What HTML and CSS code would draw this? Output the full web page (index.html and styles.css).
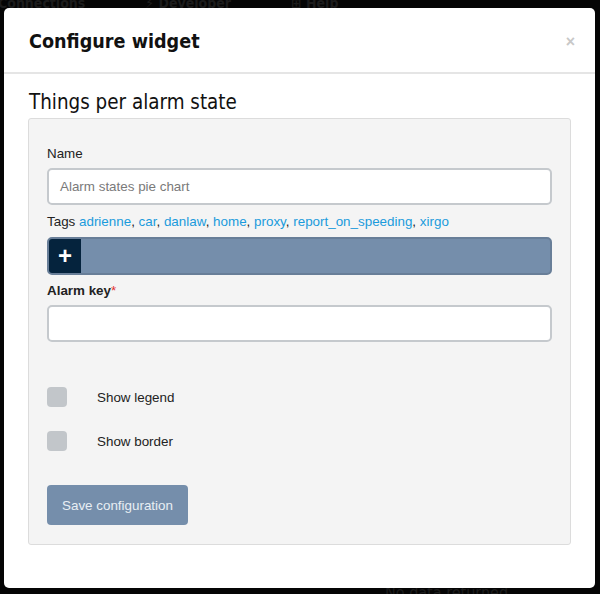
FILE: index.html
```html
<!DOCTYPE html>
<html>
<head>
<meta charset="utf-8">
<link rel="stylesheet" href="styles.css">
</head>
<body>
<div class="backdrop">
  <div class="bg-top"><span>Connections</span><span>⚡ Developer</span><span>⊞ Help</span></div>
  <div class="modal">
    <div class="modal-header">
      <h1 class="modal-title">Configure widget</h1>
      <span class="close">×</span>
    </div>
    <div class="modal-body">
      <h2 class="section-title">Things per alarm state</h2>
      <div class="panel">
        <label class="label">Name</label>
        <div class="input placeholder">Alarm states pie chart</div>
        <div class="tags">Tags <a>adrienne</a>, <a>car</a>, <a>danlaw</a>, <a>home</a>, <a>proxy</a>, <a>report_on_speeding</a>, <a>xirgo</a></div>
        <div class="tagbar"><span class="plus">+</span></div>
        <label class="label bold">Alarm key<span class="req">*</span></label>
        <div class="input"></div>
        <div class="checks">
          <div class="check"><span class="box"></span><span class="check-label">Show legend</span></div>
          <div class="check"><span class="box"></span><span class="check-label">Show border</span></div>
        </div>
        <button class="save">Save configuration</button>
      </div>
    </div>
  </div>
  <div class="bg-bottom">No data returned</div>
</div>
</body>
</html>
```
FILE: styles.css
```css
html, body {
  margin: 0;
  padding: 0;
  background: #050505;
  width: 600px;
  height: 594px;
  overflow: hidden;
  font-family: "Liberation Sans", Arial, sans-serif;
}
.backdrop {
  position: relative;
  width: 600px;
  height: 594px;
  padding-top: 8px;
  box-sizing: border-box;
}
.bg-top {
  position: absolute;
  top: -5px;
  left: -2px;
  display: flex;
  gap: 60px;
  color: #1c1c1c;
  font-size: 14px;
  font-weight: bold;
  font-family: "DejaVu Sans Condensed", sans-serif;
}
.bg-bottom {
  position: absolute;
  top: 583px;
  left: 385px;
  color: #1c1c1c;
  font-size: 16px;
  font-family: "DejaVu Sans Condensed", sans-serif;
}
.modal {
  position: relative;
  z-index: 1;
  margin-left: 4px;
  width: 591px;
  height: 580px;
  background: #fff;
  border-radius: 5px;
  box-sizing: border-box;
}
.modal-header {
  height: 66px;
  border-bottom: 2px solid #e5e5e5;
  display: flex;
  align-items: center;
  justify-content: space-between;
  padding: 2px 20px 0 25px;
  box-sizing: border-box;
}
.modal-title {
  margin: 0;
  font-family: "DejaVu Sans Condensed", sans-serif;
  font-weight: bold;
  font-size: 19.6px;
  color: #111;
}
.close {
  color: #c8c8c8;
  font-size: 16px;
  font-weight: bold;
  margin-top: 2px;
}
.modal-body {
  padding: 16px 24px 0 24px;
}
.section-title {
  margin: 0 0 4px 1px;
  font-family: "DejaVu Sans Condensed", sans-serif;
  font-weight: normal;
  font-size: 20.4px;
  color: #111;
  line-height: 24px;
}
.panel {
  background: #f4f4f4;
  border: 1px solid #dcdcdc;
  border-radius: 3px;
  padding: 27px 18px 19px 18px;
  display: flex;
  flex-direction: column;
  align-items: stretch;
}
.label {
  font-size: 13.4px;
  color: #222;
  line-height: 16px;
  margin-bottom: 6px;
}
.label.bold { font-weight: bold; margin-top: 8px; margin-bottom: 6px; }
.req { color: #e03030; font-weight: normal; }
.input {
  height: 37px;
  background: #fff;
  border: 2px solid #c5c9cd;
  border-radius: 5px;
  box-sizing: border-box;
  font-size: 13.4px;
  line-height: 33px;
  padding-left: 11px;
}
.placeholder { color: #7a7a7a; }
.tags {
  font-size: 13.4px;
  color: #222;
  margin-top: 9px;
  line-height: 16px;
}
.tags a { color: #1a9bdc; }
.tagbar {
  margin-top: 7px;
  height: 38px;
  background: #758eab;
  border: 2px solid #687e98;
  border-radius: 5px;
  box-sizing: border-box;
  overflow: hidden;
  display: flex;
}
.plus {
  width: 32px;
  background: #05233d;
  color: #fff;
  font-size: 24px;
  font-weight: bold;
  line-height: 33px;
  text-align: center;
}
.checks {
  margin-top: 45px;
  display: flex;
  flex-direction: column;
  gap: 24px;
}
.check {
  display: flex;
  align-items: center;
}
.box {
  width: 20px;
  height: 20px;
  background: #c2c6ca;
  border-radius: 4px;
}
.check-label {
  margin-left: 30px;
  font-size: 13.4px;
  color: #222;
}
.save {
  margin-top: 34px;
  align-self: flex-start;
  width: 141px;
  height: 40px;
  background: #758eab;
  border: none;
  border-radius: 4px;
  color: #e8eef4;
  font-family: "Liberation Sans", Arial, sans-serif;
  font-size: 13.4px;
}
```
